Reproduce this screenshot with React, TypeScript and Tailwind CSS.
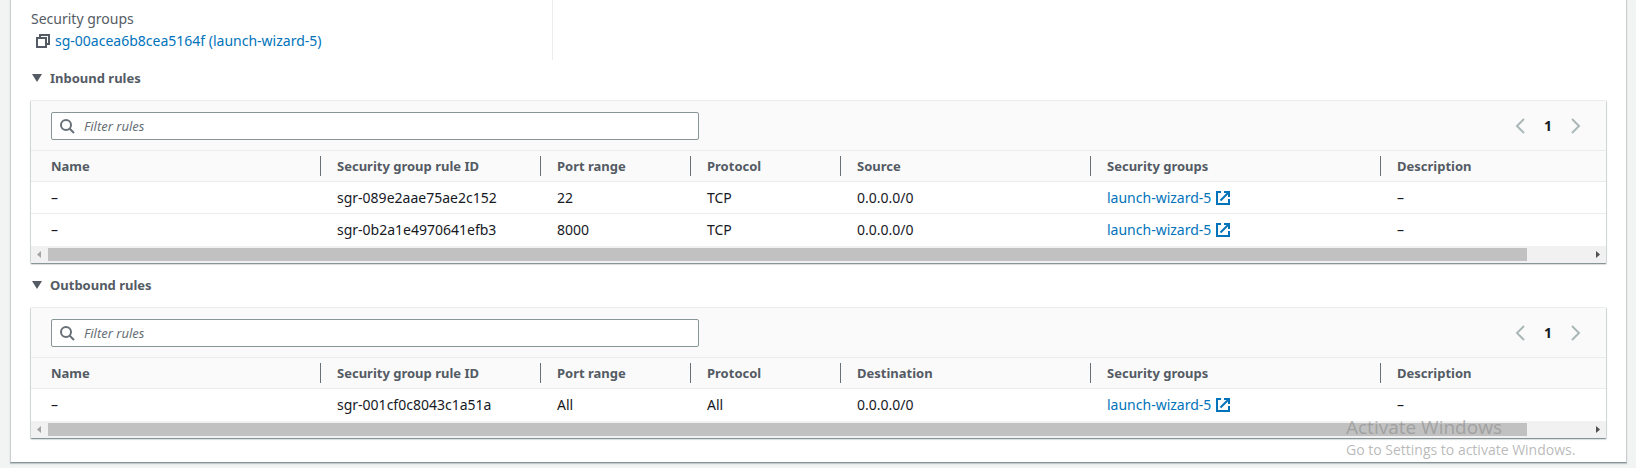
import { useId } from "react";

type Rule = { id: string; port: string; protocol: string; peer: string };

const inbound: Rule[] = [
  { id: "sgr-089e2aae75ae2c152", port: "22", protocol: "TCP", peer: "0.0.0.0/0" },
  { id: "sgr-0b2a1e4970641efb3", port: "8000", protocol: "TCP", peer: "0.0.0.0/0" },
];

const outbound: Rule[] = [
  { id: "sgr-001cf0c8043c1a51a", port: "All", protocol: "All", peer: "0.0.0.0/0" },
];

function CopyIcon() {
  return (
    <svg viewBox="0 0 16 16" className="size-4 text-[#545b64]" fill="none" stroke="currentColor" strokeWidth="2" aria-hidden="true">
      <path d="M2 5h9v9H2z" />
      <path d="M5 5V2h9v9h-3" />
    </svg>
  );
}

function ExternalIcon() {
  return (
    <svg viewBox="0 0 16 16" className="size-4 shrink-0" fill="none" stroke="currentColor" strokeWidth="2" aria-hidden="true">
      <path d="M6 2H2v12h12V9" />
      <path d="M9 2h5v5" />
      <path d="M5.5 10.5L13.5 2.5" />
    </svg>
  );
}

function SearchIcon() {
  return (
    <svg viewBox="0 0 16 16" className="size-4 text-[#687078]" fill="none" stroke="currentColor" strokeWidth="2" aria-hidden="true">
      <circle cx="7" cy="7" r="5" />
      <path d="M10.5 10.5L15 15" />
    </svg>
  );
}

function Chevron({ d }: { d: string }) {
  return (
    <svg viewBox="0 0 16 16" className="size-4" fill="none" stroke="currentColor" strokeWidth="2" aria-hidden="true">
      <path d={d} />
    </svg>
  );
}

function ScrollBar() {
  return (
    <div className="flex h-[17px] items-center bg-[#f1f1f1]" aria-hidden="true">
      <svg viewBox="0 0 17 17" className="size-[17px] shrink-0 fill-[#a3a3a3]">
        <path d="M10 5v7L6 8.5z" />
      </svg>
      <div className="h-[13px] flex-1">
        <div className="h-full w-[96%] bg-[#c1c1c1]" />
      </div>
      <svg viewBox="0 0 17 17" className="size-[17px] shrink-0 fill-[#505050]">
        <path d="M7 5v7l4-3.5z" />
      </svg>
    </div>
  );
}

function RulesSection({ title, peerLabel, rules }: { title: string; peerLabel: string; rules: Rule[] }) {
  const filterId = useId();
  const columns = ["Name", "Security group rule ID", "Port range", "Protocol", peerLabel, "Security groups", "Description"];
  return (
    <section>
      <button type="button" className="flex h-9 w-full items-center gap-2 pl-0.5 text-left text-[13px] font-bold text-[#545b64]">
        <svg viewBox="0 0 10 8" className="h-2 w-[10px] fill-current" aria-hidden="true">
          <path d="M0 0h10L5 8z" />
        </svg>
        {title}
      </button>
      <div className="mt-1 rounded-xs border border-x-[#d0d6d7] border-t-[#eaeded] border-b-[#879596] shadow-[0_1px_1px_rgba(0,28,36,0.15)]">
        <div className="flex items-center justify-between bg-[#fafafa] px-5 pt-[11px] pb-[10px]">
          <div className="flex h-7 w-[648px] items-center gap-[9px] rounded-xs border border-[#879596] bg-white px-[7px]">
            <label htmlFor={filterId} aria-label="Filter rules">
              <SearchIcon />
            </label>
            <input
              id={filterId}
              type="text"
              placeholder="Filter rules"
              className="min-w-0 flex-1 bg-transparent text-[13px] outline-none placeholder:text-[#687078] placeholder:italic"
            />
          </div>
          <div className="flex items-center gap-4 pr-0.5 text-[#aab7b8]">
            <button type="button" aria-label="Previous page">
              <Chevron d="M12 1L5 8l7 7" />
            </button>
            <span className="font-bold text-[#16191f]">1</span>
            <button type="button" aria-label="Next page">
              <Chevron d="M4 1l7 7-7 7" />
            </button>
          </div>
        </div>
        <table className="w-full table-fixed border-separate border-spacing-0 text-left whitespace-nowrap">
          <colgroup>
            <col className="w-[290px]" />
            <col className="w-[220px]" />
            <col className="w-[150px]" />
            <col className="w-[150px]" />
            <col className="w-[250px]" />
            <col className="w-[290px]" />
            <col />
          </colgroup>
          <thead className="bg-[#fafafa] text-[13px] text-[#545b64]">
            <tr>
              {columns.map((c) => (
                <th key={c} scope="col" className="group h-8 border-y border-[#eaeded] p-0 font-bold">
                  <div className="h-5 border-r border-[#687078] pl-4 leading-5 group-first:pl-5 group-last:border-r-0">{c}</div>
                </th>
              ))}
            </tr>
          </thead>
          <tbody className="[&_td]:h-8 [&_td]:border-b [&_td]:border-[#eaeded] [&_td]:pl-4 [&_td:first-child]:pl-5 [&_tr:last-child_td]:border-b-0">
            {rules.map((r) => (
              <tr key={r.id}>
                <td>–</td>
                <td>{r.id}</td>
                <td>{r.port}</td>
                <td>{r.protocol}</td>
                <td>{r.peer}</td>
                <td>
                  <a href="#launch-wizard-5" className="flex items-center gap-1 text-[#0073bb]">
                    launch-wizard-5
                    <ExternalIcon />
                  </a>
                </td>
                <td>–</td>
              </tr>
            ))}
          </tbody>
        </table>
        <ScrollBar />
      </div>
    </section>
  );
}

export default function App() {
  return (
    <div className="relative min-h-screen bg-[#f2f3f3] pr-[9px] pl-[10px] font-['Noto_Sans','Open_Sans',sans-serif] text-[14px] leading-5 text-[#16191f]">
      <main className="border-x border-b border-x-[#c9cfd0] border-b-[#879596] bg-white px-[19px] pb-[23px] shadow-[0_1px_1px_rgba(0,28,36,0.2)]">
        <div className="grid grid-cols-3 gap-1">
          <div className="h-[60px] border-r border-[#eaeded] pt-[9px] pl-px">
            <div className="text-[#545b64]">Security groups</div>
            <div className="mt-[2px] flex items-center gap-1 pl-1">
              <button type="button" aria-label="Copy security group">
                <CopyIcon />
              </button>
              <a href="#sg-00acea6b8cea5164f" className="text-[#0073bb]">
                sg-00acea6b8cea5164f (launch-wizard-5)
              </a>
            </div>
          </div>
        </div>
        <RulesSection title="Inbound rules" peerLabel="Source" rules={inbound} />
        <div className="h-[3px]" />
        <RulesSection title="Outbound rules" peerLabel="Destination" rules={outbound} />
      </main>
      <div className="pointer-events-none absolute top-[415px] left-[1346px] font-['Open_Sans',sans-serif] whitespace-nowrap text-[#8a8a8a]/60">
        <div className="text-[19px] leading-6">Activate Windows</div>
        <div className="text-[14px] leading-[22px]">Go to Settings to activate Windows.</div>
      </div>
    </div>
  );
}
